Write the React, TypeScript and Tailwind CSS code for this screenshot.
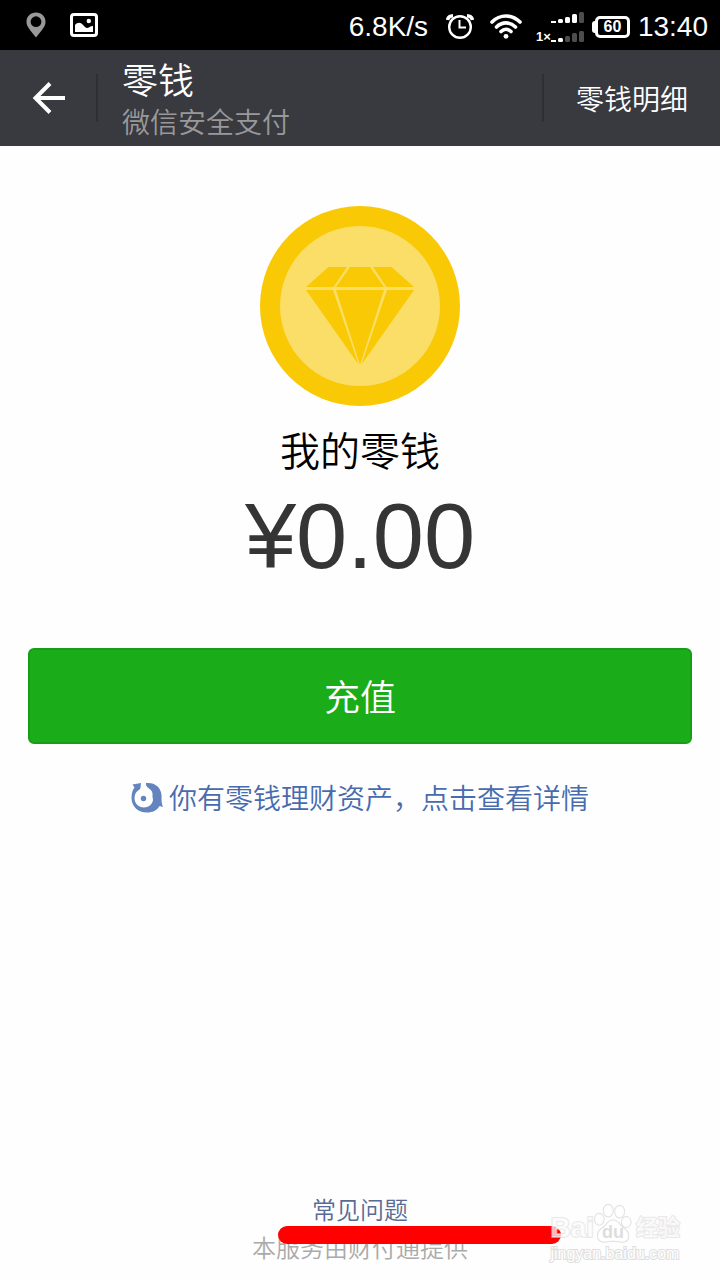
const SIGNAL_HEIGHTS = [2, 4, 6, 9, 11];

function PinIcon() {
  return (
    <svg width="20" height="26" viewBox="0 0 20 26" aria-hidden="true">
      <path
        fill="#999999"
        fillRule="evenodd"
        d="M10 0.5C4.5 0.5 0.5 4.5 0.5 9.7C0.5 15 4.5 18 10 25.5C15.5 18 19.5 15 19.5 9.7C19.5 4.5 15.5 0.5 10 0.5ZM10 4.3A5.4 5.4 0 1 1 10 15.1A5.4 5.4 0 1 1 10 4.3Z"
      />
    </svg>
  );
}

function PictureIcon() {
  return (
    <svg width="28" height="24" viewBox="0 0 28 24" aria-hidden="true">
      <rect x="1.5" y="1.5" width="25" height="21" rx="2.5" fill="none" stroke="#fff" strokeWidth="3" />
      <path fill="#fff" d="M5 19V12C7 9.5 9.5 9 11.5 10.5C14 12.5 15 15 17 15C19 15 20 13 23 13V19Z" />
      <circle cx="18.8" cy="8" r="2.2" fill="#fff" />
    </svg>
  );
}

function AlarmIcon() {
  return (
    <svg width="28" height="26" viewBox="0 0 28 26" fill="none" stroke="#fff" aria-hidden="true">
      <circle cx="14" cy="13" r="10.8" strokeWidth="2.4" />
      <path strokeWidth="2" d="M13.5 6V13.5H20" />
      <path strokeWidth="3.6" d="M1.5 6C2 3.5 4 2 7 1.8M26.5 6C26 3.5 24 2 21 1.8" />
    </svg>
  );
}

function WifiIcon() {
  return (
    <svg width="32" height="26" viewBox="0 0 32 26" fill="none" stroke="#fff" strokeWidth="3.6" strokeLinecap="round" aria-hidden="true">
      <path d="M2 8C10 0 22 0 30 8" />
      <path d="M6.5 13C12 7.500 20 7.500 25.500 13" />
      <path d="M11 17.500C14 14.500 18 14.500 21 17.500" />
      <circle cx="16" cy="22.300" r="2.400" fill="#fff" stroke="none" />
    </svg>
  );
}

function SignalBars({ active }: { active: number }) {
  return (
    <svg width="33" height="11" viewBox="0 0 33 11" aria-hidden="true">
      {SIGNAL_HEIGHTS.map((h, i) => (
        <rect key={h} x={i * 7} y={11 - h} width="5" height={h} rx={i ? 1.5 : 0} fill={i < active ? "#fff" : "#4d4d4d"} />
      ))}
    </svg>
  );
}

function Battery() {
  return (
    <div className="flex items-center">
      <div className="h-3 w-[3px] rounded-l-sm bg-white" />
      <div className="flex h-[22px] w-[35px] items-center justify-center rounded-[5px] border-3 border-white text-base leading-none font-bold">
        60
      </div>
    </div>
  );
}

function StatusBar() {
  return (
    <div className="flex h-[50px] items-center justify-between bg-black pr-3 pl-[26px] text-white">
      <div className="flex items-center gap-6">
        <PinIcon />
        <PictureIcon />
      </div>
      <div className="flex items-center pt-1">
        <span className="mr-[18px] text-[28px] leading-8">6.8K/s</span>
        <AlarmIcon />
        <div className="ml-4">
          <WifiIcon />
        </div>
        <div className="ml-[14px] flex flex-col items-end gap-2">
          <SignalBars active={4} />
          <div className="flex items-center">
            <span className="h-[11px] text-[13px] leading-3 font-bold">1×</span>
            <SignalBars active={2} />
          </div>
        </div>
        <div className="mr-2 ml-2">
          <Battery />
        </div>
        <span className="text-[28px] leading-8">13:40</span>
      </div>
    </div>
  );
}

function Header() {
  return (
    <header className="flex h-24 items-center bg-[#393a3f] text-white">
      <button type="button" aria-label="返回" className="flex h-12 w-[98px] items-center border-r-2 border-[#2e2f33] pl-8">
        <svg width="34" height="32" viewBox="0 0 34 32" fill="none" stroke="#fff" strokeWidth="4" aria-hidden="true">
          <path d="M18 1.5L3.5 16L18 30.5M3.5 16H33" />
        </svg>
      </button>
      <div className="flex-1 pt-2 pl-6">
        <h1 className="text-4xl leading-[44px]">零钱</h1>
        <p className="text-[28px] leading-10 text-[#999999]">微信安全支付</p>
      </div>
      <button type="button" className="h-12 border-l-2 border-[#2e2f33] px-8 pt-1.5 text-[28px] leading-none">
        零钱明细
      </button>
    </header>
  );
}

function Coin() {
  return (
    <svg width="200" height="200" viewBox="0 0 200 200" aria-hidden="true">
      <circle cx="100" cy="100" r="100" fill="#f9c905" />
      <circle cx="100" cy="100" r="80" fill="#fbde68" />
      <g fill="#f9c905">
        <path d="M68.5 61H87L73.5 81H46Z" />
        <path d="M90 61H110L124 81H76Z" />
        <path d="M113 61H131.5L154 81H126.5Z" />
        <path d="M46 84H73L98.5 158.5Z" />
        <path d="M76 84H124L100 159Z" />
        <path d="M127 84H154L101.5 158.5Z" />
      </g>
    </svg>
  );
}

function FundIcon() {
  return (
    <svg width="32" height="32" viewBox="0 0 32 32" aria-hidden="true">
      <path
        fill="#6384bf"
        d="M1.5 2.5L10 1H16C24 0.5 30 5.5 30.500 13C30.800 17 30 20 32 25L28.500 24C26 28.500 21.500 30.500 16 30.500C7 30.500 0.500 24.500 0.500 16C0.500 11.500 1.500 8 3.500 5.500Z"
      />
      <path
        fill="#fefefe"
        d="M10.500 0H15C14.500 3 15.500 5 18 6.500C21 8.500 22 11 21.500 13.500C21.300 15 22 16.500 22 18C21.500 22.500 17.500 25.500 13 25.500C7.500 25.500 3.500 21.500 3.500 16C3.500 12 5.500 9 8.500 7.500C10.500 6 9 3 10.500 0Z"
      />
      <circle cx="12.500" cy="16.500" r="2.700" fill="#6384bf" />
    </svg>
  );
}

function Watermark() {
  return (
    <div className="absolute right-10 bottom-4 text-[#ffffffb0] [paint-order:stroke] [-webkit-text-stroke:2px_#dcdcdc99]" aria-hidden="true">
      <div className="flex items-end font-bold">
        <span className="text-[28px] leading-8">Bai</span>
        <div className="relative h-[42px] w-[38px]">
          <svg className="absolute inset-0" width="38" height="42" viewBox="0 0 40 42" fill="#ffffffb0" stroke="#dddddd" strokeWidth="1.5">
            <ellipse cx="5.5" cy="17" rx="4.8" ry="6" />
            <ellipse cx="15" cy="8" rx="5" ry="6.5" />
            <ellipse cx="27" cy="9" rx="5" ry="6.5" />
            <ellipse cx="34" cy="20" rx="4.8" ry="5.5" />
            <path d="M20 18C14 18 13 24 8 27C2 31 2 40 10 41C14 41 16 40 20 40C24 40 27 41 31 41C38 40 38 31 32 27C27 24 26 18 20 18Z" />
          </svg>
          <span className="relative flex h-full items-end justify-center text-lg leading-6 text-[#dddddd] [-webkit-text-stroke:0px]">
            du
          </span>
        </div>
        <span className="ml-1 text-[22px] leading-8">经验</span>
      </div>
      <p className="text-base leading-5 text-white [-webkit-text-stroke:2px_#dedede]">jingyan.baidu.com</p>
    </div>
  );
}

export default function App() {
  return (
    <div className="relative flex min-h-screen flex-col bg-[#fefefe] font-['Liberation_Sans','Noto_Sans_CJK_SC',sans-serif] font-[350]">
      <StatusBar />
      <Header />

      <main className="flex flex-1 flex-col items-center px-7 pt-[60px]">
        <Coin />
        <h2 className="mt-4 text-[40px] leading-[60px] text-black">我的零钱</h2>
        <p className="text-[92px] leading-[108px] text-[#353535]">¥0.00</p>
        <button
          type="button"
          className="mt-[58px] h-24 w-full rounded-md border-2 border-[#179e16] bg-[#1aad19] pt-1.5 text-4xl text-white"
        >
          充值
        </button>
        <a href="#assets" className="mt-8 flex items-center gap-[6px] text-[28px] leading-10 text-[#476bae]">
          <FundIcon />
          <span className="pt-1">你有零钱理财资产，点击查看详情</span>
        </a>
      </main>

      <footer className="relative flex flex-col items-center pb-[11px] text-2xl">
        <a href="#faq" className="leading-9 text-[#576b95]">
          常见问题
        </a>
        <p className="leading-10 text-[#aaaaaa]">本服务由财付通提供</p>
        <div className="absolute bottom-9 left-1/2 -ml-[82px] h-[18px] w-[283px] rounded-full bg-[#ff0000]" />
      </footer>

      <Watermark />
    </div>
  );
}
